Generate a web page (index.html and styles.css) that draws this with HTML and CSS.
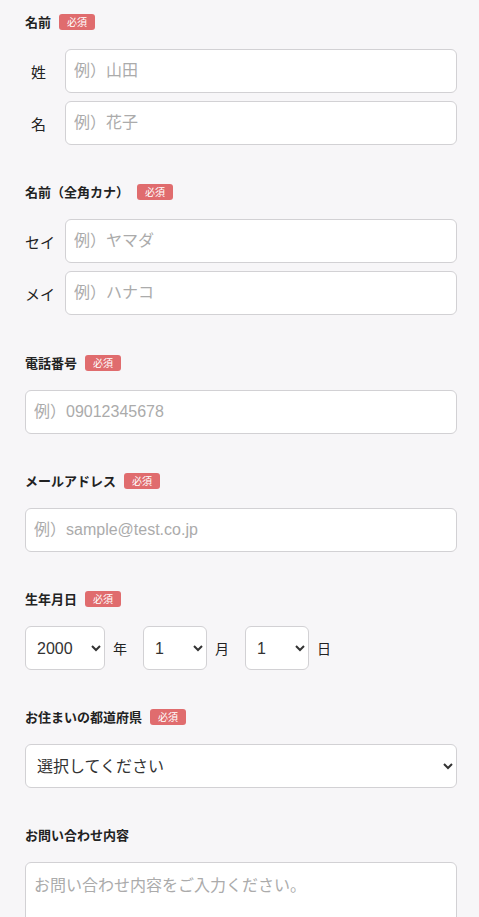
FILE: index.html
```html
<!DOCTYPE html>
<html lang="ja">
<head>
<meta charset="utf-8">
<title>お問い合わせ</title>
<link rel="stylesheet" href="styles.css">
</head>
<body>
<form class="form">
  <div class="field">
    <div class="label-row"><span class="label">名前</span><span class="badge">必須</span></div>
    <div class="rows">
      <div class="sub-row"><span class="sub-label">姓</span><input class="text" type="text" placeholder="例）山田"></div>
      <div class="sub-row"><span class="sub-label">名</span><input class="text" type="text" placeholder="例）花子"></div>
    </div>
  </div>

  <div class="field field-kana">
    <div class="label-row"><span class="label">名前（全角カナ）</span><span class="badge">必須</span></div>
    <div class="rows">
      <div class="sub-row"><span class="sub-label">セイ</span><input class="text" type="text" placeholder="例）ヤマダ"></div>
      <div class="sub-row"><span class="sub-label">メイ</span><input class="text" type="text" placeholder="例）ハナコ"></div>
    </div>
  </div>

  <div class="field">
    <div class="label-row"><span class="label">電話番号</span><span class="badge">必須</span></div>
    <input class="text" type="tel" placeholder="例）09012345678">
  </div>

  <div class="field">
    <div class="label-row"><span class="label">メールアドレス</span><span class="badge">必須</span></div>
    <input class="text" type="email" placeholder="例）sample@test.co.jp">
  </div>

  <div class="field">
    <div class="label-row"><span class="label">生年月日</span><span class="badge">必須</span></div>
    <div class="date-row">
      <select class="sel sel-year"><option>2000</option></select><span class="unit">年</span>
      <select class="sel sel-small"><option>1</option></select><span class="unit">月</span>
      <select class="sel sel-small"><option>1</option></select><span class="unit">日</span>
    </div>
  </div>

  <div class="field">
    <div class="label-row"><span class="label">お住まいの都道府県</span><span class="badge">必須</span></div>
    <select class="sel sel-full"><option>選択してください</option></select>
  </div>

  <div class="field">
    <div class="label-row"><span class="label">お問い合わせ内容</span></div>
    <textarea class="area" placeholder="お問い合わせ内容をご入力ください。"></textarea>
  </div>
</form>
</body>
</html>
```

FILE: styles.css
```css
* { box-sizing: border-box; }
html, body { margin: 0; background: #f7f6f8; }
body {
  font-family: "Liberation Sans", "Noto Sans CJK JP", sans-serif;
  color: #222;
}
.form {
  padding: 14px 22px 0 25px;
  display: flex;
  flex-direction: column;
  gap: 39px;
}
.field-kana { padding-bottom: 1px; }
.label-row {
  display: flex;
  align-items: center;
  height: 16px;
  margin-bottom: 19px;
}
.label {
  font-size: 13px;
  font-weight: bold;
  font-family: "Noto Sans CJK JP", sans-serif;
  line-height: 16px;
}
.badge {
  margin-left: 8px;
  height: 16px;
  padding: 0 8px;
  border-radius: 3px;
  background: #e06c6e;
  color: #fff;
  font-size: 10px;
  line-height: 16px;
  font-family: "Noto Sans CJK JP", sans-serif;
}
.rows { display: flex; flex-direction: column; gap: 8px; }
.sub-row { display: flex; align-items: center; }
.sub-label {
  width: 27px;
  margin-right: 13px;
  text-align: center;
  font-size: 15px;
  font-family: "Noto Sans CJK JP", sans-serif;
  white-space: nowrap;
}
.text {
  flex: 1;
  display: block;
  width: 100%;
  height: 44px;
  border: 1px solid #d2d1d4;
  border-radius: 6px;
  background: #fff;
  padding: 0 8px;
  font-size: 16px;
  font-family: "Liberation Sans", "Noto Sans CJK JP", sans-serif;
  color: #333;
  outline: none;
}
.text::placeholder, .area::placeholder { color: #ababab; }
.date-row { display: flex; align-items: center; }
.sel {
  height: 44px;
  border: 1px solid #d2d1d4;
  border-radius: 6px;
  background: #fff;
  padding: 0 6px 0 7px;
  font-size: 16px;
  font-family: "Liberation Sans", "Noto Sans CJK JP", sans-serif;
  color: #333;
}
.sel-year { width: 80px; }
.sel-small { width: 64px; }
.sel-full { width: 100%; display: block; }
.unit {
  margin-left: 8px;
  margin-right: 16px;
  font-size: 14px;
  font-family: "Noto Sans CJK JP", sans-serif;
}
.area {
  display: block;
  width: 100%;
  height: 130px;
  border: 1px solid #d2d1d4;
  border-radius: 6px;
  background: #fff;
  padding: 8px 8px;
  font-size: 16px;
  line-height: 26px;
  font-family: "Noto Sans CJK JP", sans-serif;
  resize: none;
}
```
